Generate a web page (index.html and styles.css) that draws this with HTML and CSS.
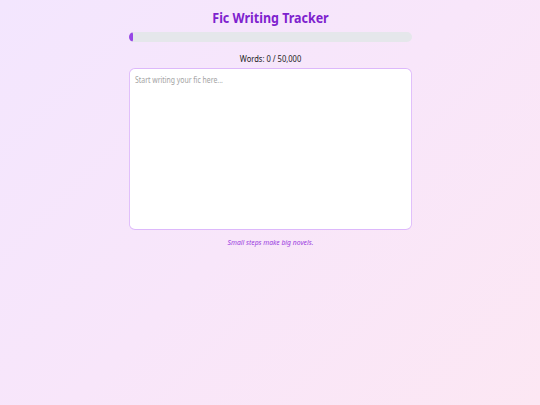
FILE: index.html
```html
<!DOCTYPE html>
<html lang="en">
<head>
<meta charset="utf-8">
<title>Fic Writing Tracker</title>
<link rel="stylesheet" href="styles.css">
</head>
<body>
<main class="app">
  <h1 class="title">Fic Writing Tracker</h1>
  <div class="progress"><div class="progress-fill" style="width: 1%"></div></div>
  <p class="count">Words: 0 / 50,000</p>
  <div class="editor-wrap">
    <textarea class="editor" placeholder="Start writing your fic here..."></textarea>
  </div>
  <p class="motto">Small steps make big novels.</p>
</main>
</body>
</html>
```
FILE: styles.css
```css
html, body {
  margin: 0;
  height: 100%;
}
body {
  font-family: "Noto Sans", "Open Sans", sans-serif;
  background: linear-gradient(135deg, #f3e6fe 0%, #f8e6fa 50%, #fce7f3 100%);
  color: #222;
}
.app {
  width: 283px;
  margin: 0 auto;
  padding-top: 7px;
  display: flex;
  flex-direction: column;
  align-items: stretch;
}
.title,
.count,
.motto {
  transform: scaleX(0.86);
}
.title {
  margin: 0;
  text-align: center;
  font-size: 14.5px;
  line-height: 20px;
  font-weight: 700;
  color: #7e22ce;
}
.progress {
  margin-top: 5px;
  height: 10px;
  border-radius: 5px;
  background: #e5e7eb;
  overflow: hidden;
}
.progress-fill {
  min-width: 4px;
  height: 100%;
  background: #9747e6;
  border-radius: 2px;
}
.count {
  margin: 10px 0 0;
  text-align: center;
  font-size: 8.8px;
  line-height: 14px;
  color: #222;
}
.editor-wrap {
  margin-top: 2px;
  height: 162px;
}
.editor {
  display: block;
  width: 329px;
  height: 162px;
  box-sizing: border-box;
  transform: scaleX(0.86);
  transform-origin: 0 0;
  border: 1.6px solid #ddb8fb;
  border-radius: 7px / 6px;
  background: #fff;
  padding: 5px 6px;
  font-family: "Noto Sans", "Open Sans", sans-serif;
  font-size: 8px;
  resize: none;
  outline: none;
}
.editor::placeholder {
  color: #a3a3a3;
}
.motto {
  margin: 6px 0 0;
  text-align: center;
  font-size: 7.9px;
  line-height: 12px;
  font-style: italic;
  color: #9b40e0;
}
```
